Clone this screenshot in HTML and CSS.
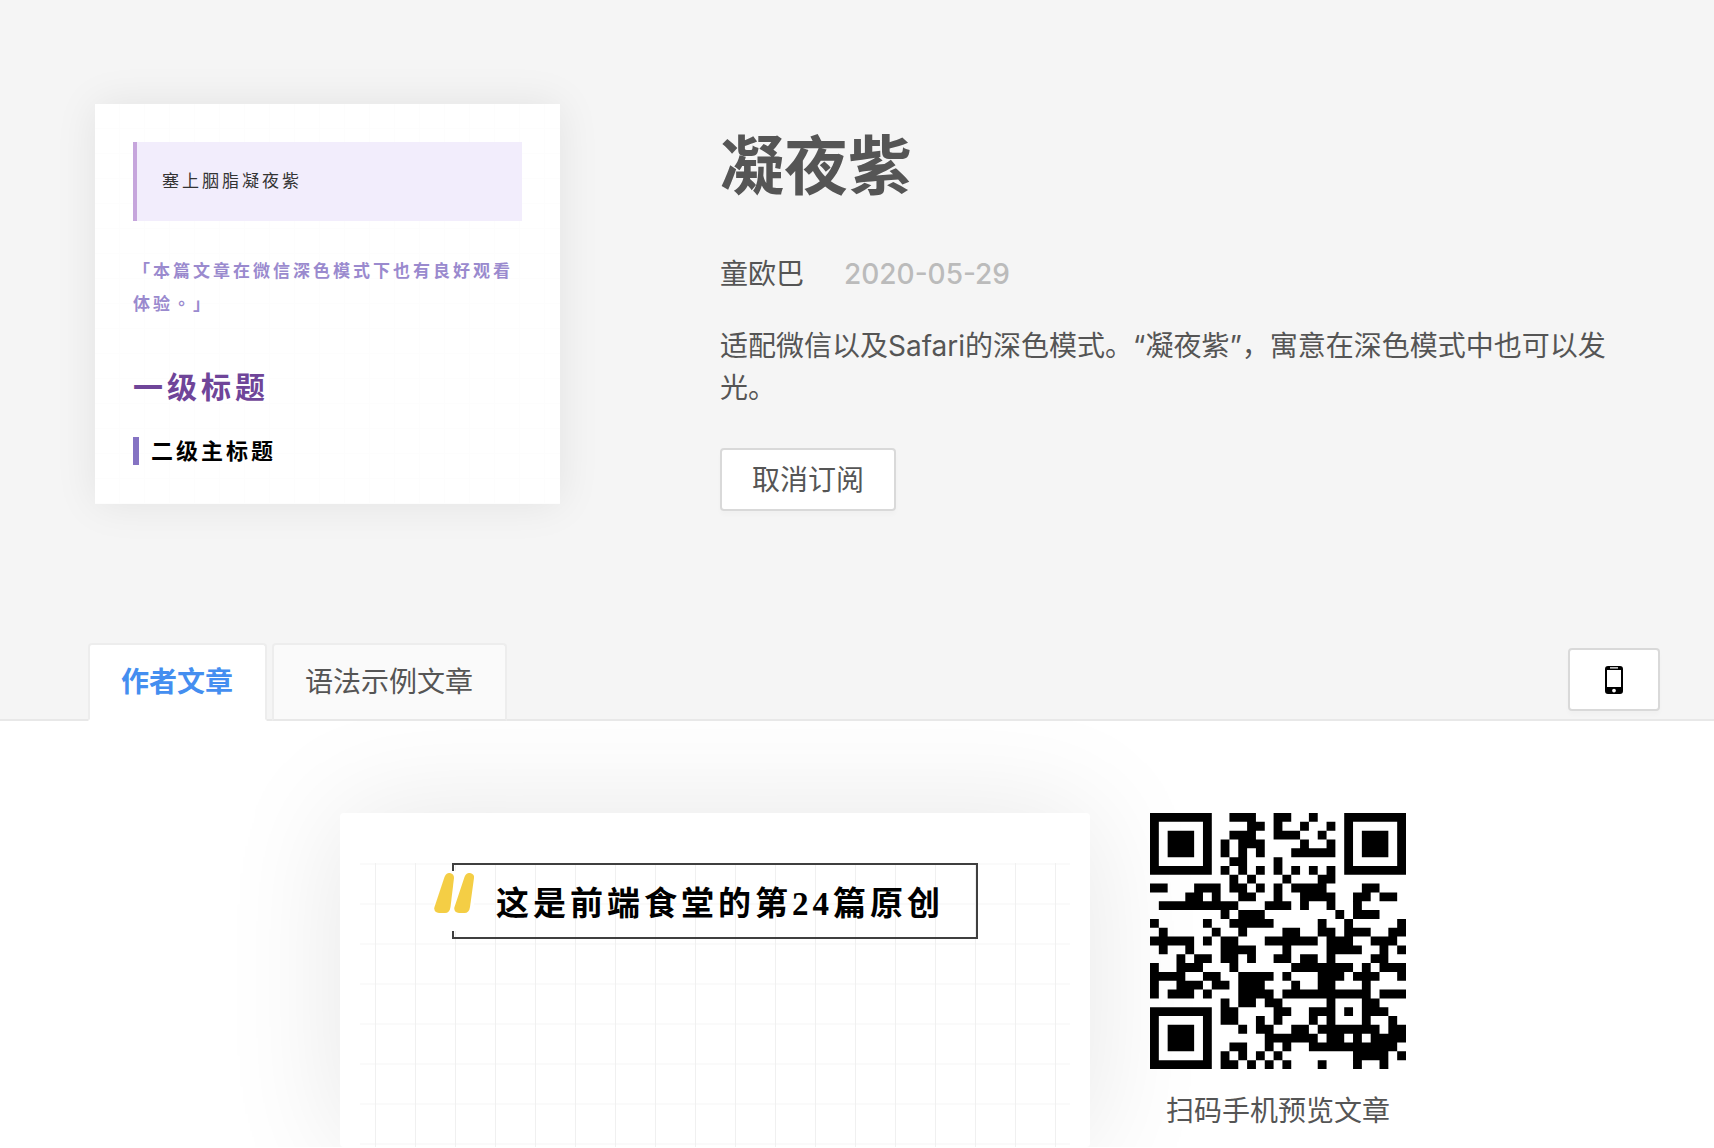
FILE: index.html
```html
<!DOCTYPE html>
<html lang="zh-CN">
<head>
<meta charset="utf-8">
<meta name="viewport" content="width=device-width, initial-scale=1">
<title>凝夜紫</title>
<link rel="stylesheet" href="styles.css">
</head>
<body>
<header class="hero">
  <section class="theme">
    <div class="cover" lang="zh-TW">
      <blockquote class="cover-quote">塞上胭脂凝夜紫</blockquote>
      <p class="cover-text">「本篇文章在微信深色模式下也有良好观看体验。」</p>
      <p class="cover-h1">一级标题</p>
      <p class="cover-h2">二级主标题</p>
    </div>
    <div class="info">
      <h1 class="info-title">凝夜紫</h1>
      <p class="info-meta"><span>童欧巴</span><time datetime="2020-05-29">2020-05-29</time></p>
      <p class="info-desc">适配微信以及Safari的深色模式。“凝夜紫”，寓意在深色模式中也可以发光。</p>
      <button class="btn" type="button">取消订阅</button>
    </div>
  </section>
  <nav class="bar">
    <div class="tabs" role="tablist">
      <button class="tab tab-active" type="button" role="tab" aria-selected="true">作者文章</button>
      <button class="tab" type="button" role="tab" aria-selected="false">语法示例文章</button>
    </div>
    <button class="btn" type="button" aria-label="手机预览">
      <svg class="phone" viewBox="0 0 28 28" aria-hidden="true">
        <path fill-rule="evenodd" d="M8 0h12a3 3 0 0 1 3 3v22a3 3 0 0 1-3 3H8a3 3 0 0 1-3-3V3a3 3 0 0 1 3-3zM7 4v17h14V4zM10 1.300h8v1.200h-8zM14 22.700a1.900 1.900 0 1 0 0 3.800a1.900 1.900 0 1 0 0-3.800z"/>
      </svg>
    </button>
  </nav>
</header>
<main class="preview">
  <article class="paper">
    <div class="paper-grid">
      <h2 class="headline">
        <svg class="headline-mark" viewBox="0 0 40 60" aria-hidden="true">
          <path d="M10.500 6C12 2 14.500 2 16 2C19 2.500 20 4.500 20 7L16.500 36C16 40 14 42 11 42H5C1.500 42 -.500 39 .500 36z"/>
          <path d="M30.500 6C32 2 34.500 2 36 2C39 2.500 40.500 4.500 40 7L36 36C35.500 40 33.500 42 30.500 42H25C21.500 42 19.500 39 20.500 36z"/>
        </svg>
        这是前端食堂的第24篇原创
      </h2>
    </div>
  </article>
  <aside class="scan">
    <svg class="qr" viewBox="0 0 29 29" role="img" aria-label="二维码"><path id="qr-path"/></svg>
    <p class="scan-label">扫码手机预览文章</p>
  </aside>
</main>
<script src="qr.js"></script>
</body>
</html>
```
FILE: styles.css
```css
* { box-sizing: border-box; }

body {
  margin: 0;
  background: #fff;
  color: #555;
  font: 28px/42px Inter, "Noto Sans CJK SC", sans-serif;
}

h1, h2, p, blockquote { margin: 0; }

button {
  font: inherit;
  color: inherit;
  cursor: pointer;
}

.hero {
  background: #f5f5f5;
  padding-top: 104px;
  border-bottom: 2px solid #e8e8e8;
}

.theme {
  display: flex;
  align-items: flex-start;
  gap: 160px;
  padding: 0 95px 132px;
}

.cover {
  flex: 0 0 465px;
  min-height: 400px;
  padding: 38px;
  font-family: "Noto Sans CJK TC", sans-serif;
  background:
    repeating-linear-gradient(90deg, transparent 0 24px, #fdfdfd 24px 25px),
    repeating-linear-gradient(transparent 0 24px, #fdfdfd 24px 25px),
    #fff;
  box-shadow: 0 0 40px rgba(0, 0, 0, .08);
}

.cover-quote {
  padding: 21px 25px 25px;
  border-left: 4px solid #c6a5dc;
  background: #f2edfc;
  color: #333;
  font-size: 17px;
  line-height: 33px;
  letter-spacing: 3px;
}

.cover-text {
  margin-top: 32px;
  color: #9a8ace;
  font-size: 17px;
  font-weight: 600;
  line-height: 33px;
  letter-spacing: 3px;
}

.cover-h1 {
  margin-top: 44px;
  color: #6f4599;
  font-size: 30px;
  font-weight: 600;
  line-height: 44px;
  letter-spacing: 4px;
}

.cover-h2 {
  margin-top: 30px;
  padding: 0 0 4px 12px;
  border-left: 6px solid #8573c3;
  color: #000;
  font-size: 22px;
  font-weight: 600;
  line-height: 24px;
  letter-spacing: 3px;
}

.info { flex: 1; padding-top: 14px; }

.info-title {
  font-size: 64px;
  font-weight: 700;
  line-height: 96px;
}

.info-meta {
  display: flex;
  gap: 40px;
  margin-top: 39px;
}

.info-meta time { color: #bbb; font-weight: 500; }

.info-desc { margin: 30px 0 39px; }

.btn {
  display: inline-flex;
  align-items: center;
  justify-content: center;
  height: 63px;
  padding: 0 30px;
  border: 2px solid #d9d9d9;
  border-radius: 4px;
  background: #fff;
  box-shadow: 0 4px 4px rgba(0, 0, 0, .02);
}

.bar {
  display: flex;
  align-items: flex-start;
  justify-content: space-between;
  padding: 0 54px 0 88px;
}

.bar .btn { margin-top: 5px; }

.phone { width: 28px; height: 28px; fill: #000; }

.tabs {
  display: flex;
  gap: 5px;
  margin-bottom: -2px;
}

.tab {
  height: 78px;
  padding: 0 32px 0 31px;
  border: 2px solid #ededed;
  border-bottom-color: #e8e8e8;
  border-radius: 4px 4px 0 0;
  background: #fafafa;
}

.tab-active {
  border-bottom-color: #fff;
  background: #fff;
  color: #448ef0;
  font-weight: 600;
}

.preview {
  display: flex;
  justify-content: center;
  align-items: flex-start;
  gap: 60px;
  padding: 92px 0 0 32px;
  overflow: hidden;
}

.paper {
  flex: 0 1 750px;
  padding: 50px 20px 0;
  border-radius: 4px;
  background: #fff;
  box-shadow: 0 0 120px rgba(0, 0, 0, .1);
}

.paper-grid {
  display: flex;
  justify-content: center;
  align-items: flex-start;
  min-height: 284px;
  background:
    repeating-linear-gradient(90deg, transparent 0 15px, #f0f0f0 15px 16px, transparent 16px 40px),
    repeating-linear-gradient(#fafafa 0 2px, transparent 2px 40px);
}

.headline {
  position: relative;
  padding: 19px 32px 13px 42px;
  border: 2px solid #3f3f3f;
  color: #000;
  font: 600 33px/40px "Liberation Serif", "Noto Sans CJK TC", serif;
  letter-spacing: 4px;
}

/* Quote mark that interrupts the left border of the frame. */
.headline-mark {
  position: absolute;
  left: -20px;
  top: 6px;
  width: 40px;
  height: 60px;
  background: #fff;
  fill: #f4ce45;
}

.scan {
  flex: 0 0 256px;
  text-align: center;
}

.qr { display: block; width: 100%; }

.scan-label { margin-top: 21px; }
```
FILE: qr.js
```js
// Dark modules of the QR code, one string per row, as column runs.
const rows = [
  "0-6 9-11 14-15 18 22-28",
  "0 6 11-12 14 17 20 22 28",
  "0 2-4 6 9-11 14-16 19 22 24-26 28",
  "0 2-4 6 8 10-12 17 20 22 24-26 28",
  "0 2-4 6 8 10 12 16-20 22 24-26 28",
  "0 6 9-10 14 22 28",
  "0-6 8 10 12 14 16 18 20 22-28",
  "9 11 15 19-20",
  "0-1 5-7 9-10 12 14 16-19 24-25",
  "4-5 7 10-11 14 17-20 23-24 26-27",
  "1-9 13-15 17 20 23",
  "8 10-12 21 23-25",
  "0 6 9-13 19 22 28",
  "1 7 10 15-16 19-20 22-24 27-28",
  "0-4 6 8-9 13-18 20-22 25-27",
  "1 4 8-11 15 20-23 26 28",
  "3 5-6 8-9 11 14-15 17-18 20 25-26",
  "0 3-5 9 16-22 24 26-28",
  "0-3 6-7 10-13 15 19-21 23-25 28",
  "0 3-5 7-8 10-12 16 19-20 24",
  "0 2-4 6 10-13 15-24 26-28",
  "8 10-11 13-14 20 24-25",
  "0-6 8-9 14-15 18-20 22 24-26",
  "0 6 8-9 12 14 18 20 24 27",
  "0 2-4 6 10 12-13 16-17 19-25 27-28",
  "0 2-4 6 13-18 20-21 23 25-28",
  "0 2-4 6 9-10 13 15 18-27",
  "0 6 8 10 12 14 23-26 28",
  "0-6 8-9 11 13 15 19 23 26"
];

document.getElementById("qr-path").setAttribute("d", rows.map((row, y) =>
  row.split(" ").map(run => {
    const [start, end = start] = run.split("-").map(Number);
    const width = end - start + 1;
    return `M${start} ${y}h${width}v1h${-width}z`;
  }).join("")
).join(""));
```
